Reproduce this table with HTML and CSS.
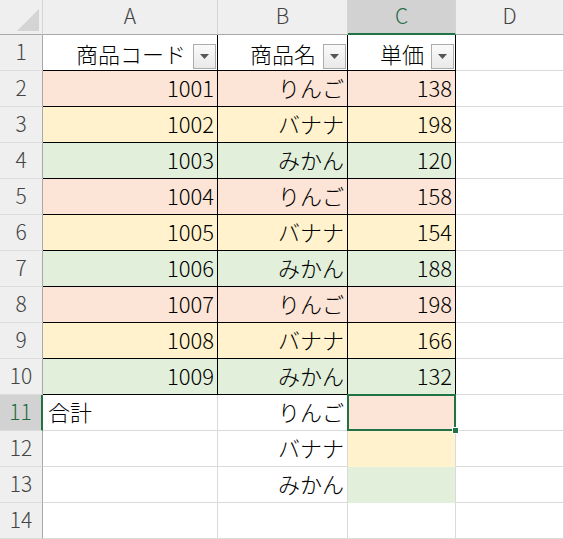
FILE: index.html
```html
<!DOCTYPE html>
<html lang="ja">
<head>
<meta charset="utf-8">
<link rel="stylesheet" href="styles.css">
</head>
<body>
<div class="sheet">
  <div class="hd corner"><svg class="corner-tri" width="26" height="26" viewBox="0 0 26 26"><polygon points="25,3 25,25 3,25" fill="#d4d4d4"/></svg></div>
  <div class="hd col">A</div>
  <div class="hd col">B</div>
  <div class="hd col sel-col">C</div>
  <div class="hd col">D</div>

  <div class="hd row">1</div>
  <div class="c t r hdr">商品コード<span class="fb"><svg width="9" height="5" viewBox="0 0 9 5"><polygon points="0,0 9,0 4.5,5" fill="#555"/></svg></span></div>
  <div class="c t r hdr">商品名<span class="fb"><svg width="9" height="5" viewBox="0 0 9 5"><polygon points="0,0 9,0 4.5,5" fill="#555"/></svg></span></div>
  <div class="c t r hdr">単価<span class="fb"><svg width="9" height="5" viewBox="0 0 9 5"><polygon points="0,0 9,0 4.5,5" fill="#555"/></svg></span></div>
  <div class="c"></div>

  <div class="hd row">2</div>
  <div class="c t r red">1001</div><div class="c t r red">りんご</div><div class="c t r red">138</div><div class="c"></div>
  <div class="hd row">3</div>
  <div class="c t r yel">1002</div><div class="c t r yel">バナナ</div><div class="c t r yel">198</div><div class="c"></div>
  <div class="hd row">4</div>
  <div class="c t r grn">1003</div><div class="c t r grn">みかん</div><div class="c t r grn">120</div><div class="c"></div>
  <div class="hd row">5</div>
  <div class="c t r red">1004</div><div class="c t r red">りんご</div><div class="c t r red">158</div><div class="c"></div>
  <div class="hd row">6</div>
  <div class="c t r yel">1005</div><div class="c t r yel">バナナ</div><div class="c t r yel">154</div><div class="c"></div>
  <div class="hd row">7</div>
  <div class="c t r grn">1006</div><div class="c t r grn">みかん</div><div class="c t r grn">188</div><div class="c"></div>
  <div class="hd row">8</div>
  <div class="c t r red">1007</div><div class="c t r red">りんご</div><div class="c t r red">198</div><div class="c"></div>
  <div class="hd row">9</div>
  <div class="c t r yel">1008</div><div class="c t r yel">バナナ</div><div class="c t r yel">166</div><div class="c"></div>
  <div class="hd row">10</div>
  <div class="c t r grn">1009</div><div class="c t r grn">みかん</div><div class="c t r grn">132</div><div class="c"></div>

  <div class="hd row sel-row">11</div>
  <div class="c l">合計</div><div class="c r">りんご</div><div class="c red sel"></div><div class="c"></div>
  <div class="hd row">12</div>
  <div class="c"></div><div class="c r">バナナ</div><div class="c yel nb"></div><div class="c"></div>
  <div class="hd row">13</div>
  <div class="c"></div><div class="c r">みかん</div><div class="c grn nb"></div><div class="c"></div>
  <div class="hd row">14</div>
  <div class="c"></div><div class="c"></div><div class="c"></div><div class="c"></div>
</div>
</body>
</html>
```

FILE: styles.css
```css
html, body {
  margin: 0;
  padding: 0;
  background: #ffffff;
}

.sheet {
  display: grid;
  grid-template-columns: 43px 175px 130px 108px 108px;
  grid-template-rows: 35px repeat(14, 36px);
  font-family: "Noto Sans CJK JP", "Noto Sans", sans-serif;
  font-size: 22px;
  font-weight: 300;
  color: #000;
}

.hd {
  background: #efefef;
  color: #444;
  border-right: 1px solid #d4d4d4;
  border-bottom: 1px solid #d4d4d4;
  box-sizing: border-box;
  display: flex;
  align-items: center;
  justify-content: center;
  font-size: 21px;
  padding-bottom: 4px;
}

.corner {
  position: relative;
  border-right: 1px solid #d4d4d4;
  border-bottom: 1px solid #a8a8a8;
  padding-bottom: 0;
}

.corner-tri {
  position: absolute;
  right: 2px;
  bottom: 2px;
}

.col {
  border-bottom: 1px solid #a8a8a8;
}

.row {
  border-right: 1px solid #a8a8a8;
  border-bottom: 1px solid #dcdcdc;
}

.sel-col {
  background: #d2d2d2;
  color: #1e6b41;
  border-bottom: 2px solid #217346;
}

.sel-row {
  background: #d2d2d2;
  color: #1e6b41;
  border-right: 2px solid #217346;
}

.c {
  box-sizing: border-box;
  border-right: 1px solid #dadada;
  border-bottom: 1px solid #dadada;
  display: flex;
  align-items: center;
  padding: 0 3px 4px;
  white-space: nowrap;
  position: relative;
}

.r {
  justify-content: flex-end;
}

.l {
  justify-content: flex-start;
  padding-left: 5px;
}

.t {
  border-right: 1px solid #000;
  border-bottom: 1px solid #000;
}

.hdr {
  padding-right: 1px;
  padding-bottom: 0;
}

.hdr-text {
  margin-bottom: 4px;
}

.fb {
  width: 23px;
  height: 25px;
  box-sizing: border-box;
  margin-left: 7px;
  border: 1px solid #acacac;
  background: linear-gradient(#fafafa, #e9e9e9);
  display: flex;
  align-items: center;
  justify-content: center;
  align-self: flex-end;
  margin-bottom: 1px;
}

.red { background: #fce4d6; }
.yel { background: #fff2cc; }
.grn { background: #e2efda; }

.nb {
  border-bottom-color: transparent;
}

.sel::after {
  content: "";
  position: absolute;
  left: -1px;
  top: -1px;
  right: -1px;
  bottom: -1px;
  border: 2px solid #217346;
}

.sel::before {
  content: "";
  position: absolute;
  right: -4px;
  bottom: -4px;
  width: 7px;
  height: 7px;
  background: #217346;
  border: 1px solid #fff;
  box-sizing: border-box;
  z-index: 2;
}
```
